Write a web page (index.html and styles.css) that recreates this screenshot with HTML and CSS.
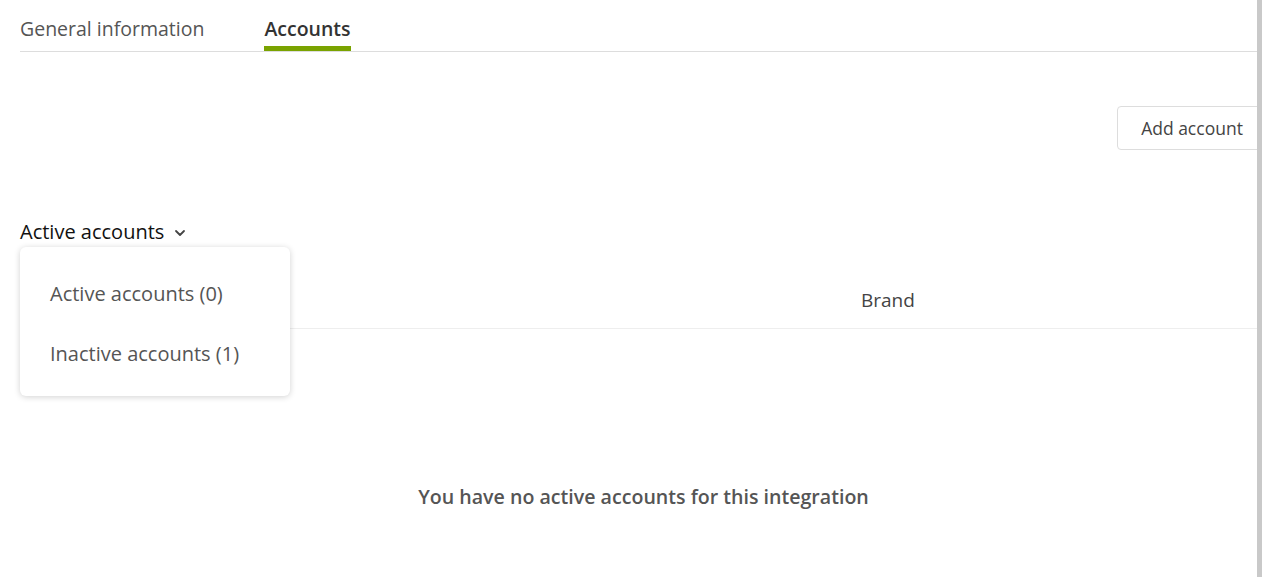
FILE: index.html
```html
<!DOCTYPE html>
<html lang="en">
<head>
    <meta charset="UTF-8">
    <meta name="viewport" content="width=device-width, initial-scale=1.0">
    <title>Integration accounts</title>
    <link rel="stylesheet" href="styles.css">
</head>
<body>
    <div class="page">
        <div class="content">
            <div class="tabs">
                <div class="tab">General information</div>
                <div class="tab active">Accounts</div>
            </div>

            <div class="toolbar">
                <button class="btn">Add account</button>
            </div>

            <div class="filter">
                <div class="filter-toggle">
                    Active accounts
                    <svg class="chevron" width="12" height="8" viewBox="0 0 12 8">
                        <path d="M2 2 L6 6 L10 2" fill="none" stroke="#444" stroke-width="1.8" stroke-linecap="round" stroke-linejoin="round"/>
                    </svg>
                </div>
                <div class="menu">
                    <div class="menu-item">Active accounts (0)</div>
                    <div class="menu-item">Inactive accounts (1)</div>
                </div>
            </div>

            <div class="table-head">
                <div class="col"></div>
                <div class="col">Brand</div>
            </div>

            <div class="empty">You have no active accounts for this integration</div>
        </div>
    </div>
</body>
</html>
```

FILE: styles.css
```css
body {
    margin: 0;
    background-color: white;
    font-family: "Open Sans", "Noto Sans", sans-serif;
    color: #444;
}
.page {
    width: 1262px;
    height: 577px;
    border-right: 5px solid #c9c9c9;
    overflow: hidden;
    padding-left: 20px;
    box-sizing: border-box;
}
.content {
    width: 1247px;
}
.tabs {
    display: flex;
    gap: 60px;
    border-bottom: 1px solid #ddd;
    height: 52px;
    box-sizing: border-box;
}
.tab {
    font-size: 19.5px;
    color: #555;
    padding-top: 15px;
}
.tab.active {
    font-weight: 600;
    color: #333;
    border-bottom: 5px solid #7aa300;
}
.toolbar {
    display: flex;
    justify-content: flex-end;
    margin-top: 54px;
}
.btn {
    font-family: inherit;
    font-size: 17.5px;
    color: #444;
    background: white;
    border: 1px solid #ddd;
    border-radius: 4px;
    height: 44px;
    width: 150px;
    padding: 0;
}
.filter {
    position: relative;
    margin-top: 68px;
}
.filter-toggle {
    display: flex;
    align-items: center;
    gap: 10px;
    font-size: 20px;
    color: #111;
    height: 26px;
}
.chevron {
    margin-top: 3px;
}
.menu {
    position: absolute;
    top: 29px;
    left: 0;
    width: 270px;
    padding: 17px 0 12px;
    background: white;
    border-radius: 6px;
    box-shadow: 0 1px 6px rgba(0,0,0,0.18);
    z-index: 2;
}
.menu-item {
    font-size: 20px;
    color: #555;
    padding: 0 30px;
    height: 60px;
    line-height: 60px;
}
.table-head {
    display: grid;
    grid-template-columns: 841px 1fr;
    align-items: center;
    padding-top: 25px;
    border-bottom: 1px solid #eee;
    height: 56px;
    margin-top: 3px;
}
.col {
    font-size: 19px;
    color: #444;
}
.empty {
    text-align: center;
    font-size: 19.6px;
    font-weight: 600;
    color: #555;
    margin-top: 154px;
}
```
